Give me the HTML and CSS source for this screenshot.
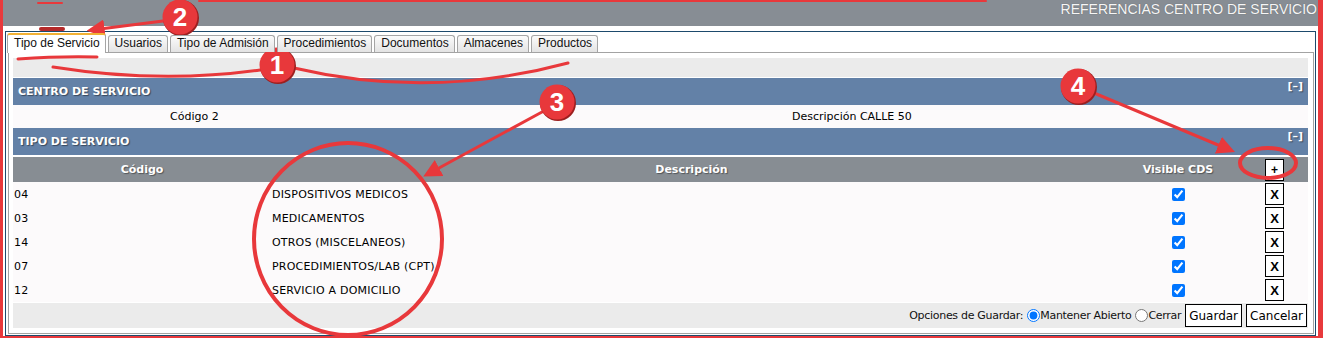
FILE: index.html
```html
<!DOCTYPE html>
<html lang="es">
<head>
    <meta charset="UTF-8">
    <title>Referencias Centro de Servicio</title>
    <link rel="stylesheet" href="styles.css">
</head>
<body>

    <div class="page">
        <div class="frame">
            <!-- Title bar -->
            <div class="titlebar">REFERENCIAS CENTRO DE SERVICIO</div>

            <div class="window">
                <!-- Tabs -->
                <ul class="tabs">
                    <li class="tab active">Tipo de Servicio</li>
                    <li class="tab">Usuarios</li>
                    <li class="tab">Tipo de Admisión</li>
                    <li class="tab">Procedimientos</li>
                    <li class="tab">Documentos</li>
                    <li class="tab">Almacenes</li>
                    <li class="tab">Productos</li>
                </ul>

                <div class="panel">
                    <div class="toolbar"></div>

                    <div class="section">
                        <span class="section-title">CENTRO DE SERVICIO</span>
                        <span class="toggle">[–]</span>
                    </div>
                    <div class="info-row">
                        <span>Código 2</span>
                        <span>Descripción CALLE 50</span>
                    </div>

                    <div class="section">
                        <span class="section-title">TIPO DE SERVICIO</span>
                        <span class="toggle">[–]</span>
                    </div>

                    <table class="grid">
                        <colgroup>
                            <col class="col-code">
                            <col class="col-desc">
                            <col class="col-visible">
                            <col class="col-action">
                        </colgroup>
                        <thead>
                            <tr>
                                <th>Código</th>
                                <th>Descripción</th>
                                <th>Visible CDS</th>
                                <th class="action"><button class="sq-btn plus">+</button></th>
                            </tr>
                        </thead>
                        <tbody>
                            <tr>
                                <td>04</td>
                                <td>DISPOSITIVOS MEDICOS</td>
                                <td class="center"><input type="checkbox" checked></td>
                                <td class="action"><button class="sq-btn">X</button></td>
                            </tr>
                            <tr>
                                <td>03</td>
                                <td>MEDICAMENTOS</td>
                                <td class="center"><input type="checkbox" checked></td>
                                <td class="action"><button class="sq-btn">X</button></td>
                            </tr>
                            <tr>
                                <td>14</td>
                                <td>OTROS (MISCELANEOS)</td>
                                <td class="center"><input type="checkbox" checked></td>
                                <td class="action"><button class="sq-btn">X</button></td>
                            </tr>
                            <tr>
                                <td>07</td>
                                <td>PROCEDIMIENTOS/LAB (CPT)</td>
                                <td class="center"><input type="checkbox" checked></td>
                                <td class="action"><button class="sq-btn">X</button></td>
                            </tr>
                            <tr>
                                <td>12</td>
                                <td>SERVICIO A DOMICILIO</td>
                                <td class="center"><input type="checkbox" checked></td>
                                <td class="action"><button class="sq-btn">X</button></td>
                            </tr>
                        </tbody>
                    </table>

                    <!-- Save options -->
                    <div class="footer">
                        <span>Opciones de Guardar:</span>
                        <input type="radio" name="guardar" checked><span>Mantener Abierto</span>
                        <input type="radio" name="guardar"><span>Cerrar</span>
                        <button class="btn">Guardar</button>
                        <button class="btn">Cancelar</button>
                    </div>
                </div>
            </div>
        </div>

        <!-- Red review marks drawn over the screen -->
        <svg class="marks" width="1323" height="338" viewBox="0 0 1323 338">
            <defs>
                <marker id="head" viewBox="0 0 10 10" refX="7" refY="5" markerWidth="6" markerHeight="6" orient="auto">
                    <path d="M0,0 L10,5 L0,10 z" fill="#e8383b"/>
                </marker>
            </defs>
            <g fill="none" stroke="#e8383b" stroke-width="3" stroke-linecap="round">
                <path d="M199 1 H986" stroke-width="2"/>
                <path d="M38 3 H62" stroke-width="2"/>
                <path d="M41 29 H63" stroke="#b52a2a" stroke-width="4"/>
                <path d="M18 59 Q60 56 97 57"/>
                <path d="M53 67 Q160 84 260 70"/>
                <path d="M294 68 Q430 100 568 63"/>
                <path d="M163 21 L92 30" marker-end="url(#head)"/>
                <path d="M542 112 L428 174" marker-end="url(#head)"/>
                <path d="M1094 93 L1230 150" marker-end="url(#head)"/>
                <ellipse cx="348" cy="239" rx="94" ry="96" stroke-width="4"/>
                <ellipse cx="1268" cy="163" rx="28" ry="15" stroke-width="4"/>
            </g>
            <g class="badge">
                <circle cx="181" cy="18" r="18" fill="#9c1f1f"/>
                <circle cx="180" cy="17" r="17.5" fill="#e8383b"/>
                <text x="180" y="26">2</text>
            </g>
            <g class="badge">
                <circle cx="278" cy="66" r="18" fill="#9c1f1f"/>
                <circle cx="277" cy="65" r="17.5" fill="#e8383b"/>
                <text x="277" y="74">1</text>
            </g>
            <g class="badge">
                <circle cx="558" cy="103" r="18" fill="#9c1f1f"/>
                <circle cx="557" cy="102" r="17.5" fill="#e8383b"/>
                <text x="557" y="111">3</text>
            </g>
            <g class="badge">
                <circle cx="1079" cy="87" r="18" fill="#9c1f1f"/>
                <circle cx="1078" cy="86" r="17.5" fill="#e8383b"/>
                <text x="1078" y="95">4</text>
            </g>
        </svg>
    </div>

</body>
</html>
```

FILE: styles.css
```css
body {
    margin: 0;
    font-family: "DejaVu Sans", Verdana, sans-serif;
    font-size: 11px;
    color: #000;
}
.page {
    position: relative;
    width: 1323px;
    height: 338px;
}
.frame {
    box-sizing: border-box;
    height: 338px;
    border-left: 3px solid #e8393c;
    border-right: 5px solid #e8393c;
    border-bottom: 2px solid #e8393c;
    background-color: #fff;
    display: flex;
    flex-direction: column;
}
.titlebar {
    height: 26px;
    box-sizing: border-box;
    padding: 1px 1px 0 0;
    background-color: #878d94;
    color: #f6f6f6;
    font: 14px/17px "Liberation Sans", Arial, sans-serif;
    text-align: right;
    text-shadow: 0 0 1px rgba(0, 0, 0, 0.35);
}
.window {
    flex: 1;
    margin: 5px 2px 0;
    border: 1px solid #1d4a6c;
    display: flex;
    flex-direction: column;
}
.tabs {
    list-style: none;
    margin: 0;
    padding: 1px 0 0 1px;
    height: 19px;
    display: flex;
    align-items: flex-end;
    gap: 2px;
    position: relative;
    z-index: 1;
}
.tab {
    box-sizing: border-box;
    height: 17px;
    padding: 0 5px 0 6px;
    border: 1px solid #a5a5a5;
    border-bottom: 0;
    border-radius: 3px 3px 0 0;
    background: linear-gradient(#fbfbfb, #e3e3e3);
    font: 12px/15px "Liberation Sans", Arial, sans-serif;
    color: #111;
}
.tab.active {
    height: 20px;
    margin-bottom: -1px;
    border-top: 2px solid #f2b134;
    background: #fff;
    line-height: 17px;
}
.panel {
    flex: 1;
    margin: 0 1px 1px 2px;
    padding: 5px 5px 5px 4px;
    border: 1px solid #a3a3a3;
    display: flex;
    flex-direction: column;
}
.toolbar {
    height: 19px;
    margin-bottom: 1px;
    background-color: #ebebeb;
}
.section {
    height: 27px;
    padding: 0 5px;
    background-color: #6381a7;
    color: #fff;
    font-weight: bold;
    display: flex;
    justify-content: space-between;
    align-items: center;
    text-shadow: 1px 1px 1px rgba(0, 0, 0, 0.45);
}
.section .toggle {
    align-self: flex-start;
    margin-top: 2px;
    line-height: 13px;
}
.info-row {
    height: 23px;
    padding-left: 157px;
    background-color: #fcfafb;
    display: grid;
    grid-template-columns: 622px 1fr;
    align-items: center;
}
.grid {
    width: 100%;
    margin-top: 2px;
    border-collapse: collapse;
    border-spacing: 0;
    table-layout: fixed;
    background-color: #fcfafb;
}
.col-code { width: 258px; }
.col-desc { width: 841px; }
.col-visible { width: 132px; }
.col-action { width: 64px; }
.grid th {
    height: 25px;
    padding: 0;
    background-color: #878d93;
    color: #fff;
    font-weight: bold;
    text-align: center;
    text-shadow: 1px 1px 1px rgba(0, 0, 0, 0.4);
}
.grid td {
    height: 24px;
    padding: 0 1px;
    vertical-align: middle;
    letter-spacing: 0.2px;
}
.grid .center, .grid .action {
    text-align: center;
}
.grid .action {
    padding: 0 3px 0 0;
}
.grid input[type="checkbox"] {
    margin: 0;
    width: 13px;
    height: 13px;
    vertical-align: middle;
}
.sq-btn {
    box-sizing: border-box;
    width: 19px;
    height: 22px;
    padding: 0;
    border: 1px solid #000;
    border-radius: 0;
    background-color: #fff;
    color: #000;
    font: bold 13px "Liberation Sans", Arial, sans-serif;
    vertical-align: middle;
}
.sq-btn.plus {
    font-size: 12px;
}
.footer {
    height: 25px;
    margin-top: 1px;
    padding-right: 1px;
    background-color: #ebebeb;
    display: flex;
    justify-content: flex-end;
    align-items: center;
    color: #111;
    letter-spacing: -0.3px;
}
.footer input[type="radio"] {
    margin: 0 0 0 4px;
    width: 13px;
    height: 13px;
}
.btn {
    box-sizing: border-box;
    height: 23px;
    margin-left: 4px;
    padding: 0 3px;
    border: 1px solid #000;
    border-radius: 0;
    background-color: #fff;
    color: #000;
    font: 12px "DejaVu Sans", Verdana, sans-serif;
    letter-spacing: 0;
}
.marks {
    position: absolute;
    top: 0;
    left: 0;
    pointer-events: none;
}
.badge text {
    fill: #fff;
    font: bold 26px "Liberation Sans", Arial, sans-serif;
    text-anchor: middle;
}
```
